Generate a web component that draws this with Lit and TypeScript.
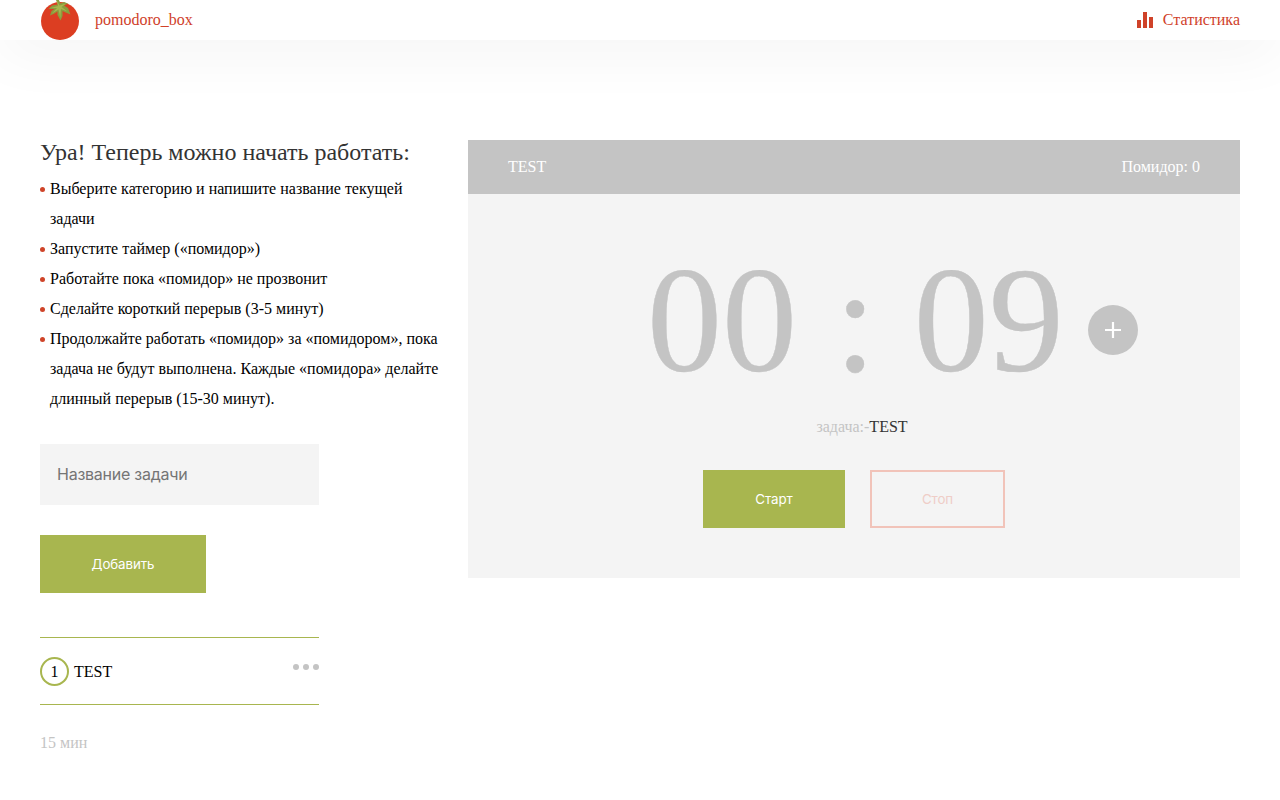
import { LitElement, html, css, svg } from "lit";
import { customElement } from "lit/decorators.js";

const steps = [
  "Выберите категорию и напишите название текущей задачи",
  "Запустите таймер («помидор»)",
  "Работайте пока «помидор» не прозвонит",
  "Сделайте короткий перерыв (3-5 минут)",
  "Продолжайте работать «помидор» за «помидором», пока задача не будут выполнена. Каждые «помидора» делайте длинный перерыв (15-30 минут).",
];

const tomato = svg`
  <circle cx="20" cy="21" r="19" fill="#dc3e22"/>
  <path fill="#8c9c3e" d="M15.500 -1 L18.500 -1 L20.500 3.500 L24 2 L28 3.500 L24 5.500 L28 8 L30.500 14.500 L24.500 12 L22.500 11 L22.500 16 L20.500 20.500 L17.500 15 L17.500 11.500 L13.500 14 L10 15.500 L11.500 11 L14.500 9 L8.500 9 L12 5.500 L18 4.500 Z"/>
  <path fill="#a8b64f" d="M16.500 0 L19.500 5.500 L26 3.500 L21.500 7 L27.500 11.500 L21 9 L20.300 18 L18.500 9.500 L12 13.500 L17 8 L11 8 L18 6 Z"/>`;

@customElement("app-root")
export class AppRoot extends LitElement {
  static styles = css`
    :host { display: block; min-height: 800px; background: #fff; color: #000; font: 16px "Liberation Serif", "Times New Roman", serif; }
    * { box-sizing: border-box; }
    .header { height: 40px; padding: 0 40px; display: flex; align-items: center; justify-content: space-between; background: #fff; color: #d0412a; box-shadow: 0 10px 60px rgba(0,0,0,.06); }
    .logo, .stats { display: flex; align-items: center; }
    .logo { gap: 15px; }
    .stats { gap: 10px; }
    svg { display: block; }
    .main { display: flex; padding: 100px 40px 0; }
    .left { width: 400px; margin-right: 28px; flex: none; }
    h1 { margin: 0; font-size: 24px; font-weight: 400; line-height: 24px; color: #333; white-space: nowrap; }
    .steps { margin: 10px 0 30px; padding: 0; list-style: none; line-height: 30px; }
    .steps li { display: flex; }
    .steps li::before { content: ""; flex: none; width: 5px; height: 5px; margin: 13px 5px 0 0; border-radius: 50%; background: #cf4429; }
    .field { display: block; width: 279px; height: 61px; padding: 0 17px 2px; border: 0; background: #f4f4f4; font: 16px Inter, sans-serif; letter-spacing: -.25px; }
    .field::placeholder { color: #757575; opacity: 1; }
    .btn { height: 58px; padding: 0; border: 0; background: #a8b64f; color: #fff; font: 13.333px Inter, sans-serif; letter-spacing: -.1px; }
    .add { display: block; width: 166px; margin-top: 30px; }
    .task { width: 279px; height: 68px; margin-top: 44px; border: solid #a8b64f; border-width: 1px 0; display: flex; align-items: center; }
    .num { width: 29px; height: 29px; margin-right: 5px; border: 2px solid #a8b64f; border-radius: 50%; display: flex; align-items: center; justify-content: center; padding-top: 1px; }
    .name { padding-top: 2px; }
    .dots { margin: 0 0 9px auto; }
    .total { margin-top: 28px; line-height: 20px; color: #c4c4c4; }
    .panel { flex: 1; height: 438px; background: #f4f4f4; }
    .bar { height: 54px; padding: 0 40px; display: flex; align-items: center; justify-content: space-between; background: #c4c4c4; color: #fff; }
    .clock { display: flex; align-items: center; padding: 40px 0 0 179px; height: 212px; color: #c4c4c4; }
    .time { font-size: 150px; line-height: 172px; white-space: nowrap; -webkit-text-stroke: .4px #c4c4c4; }
    .plus { width: 50px; height: 50px; margin: 20px 0 0 24px; padding: 0; border: 0; background: none; }
    .current { margin: 11px 0 0 16px; line-height: 20px; text-align: center; color: #c4c4c4; }
    .current span { color: #333; }
    .actions { display: flex; justify-content: center; gap: 25px; margin-top: 33px; }
    .start { width: 142px; }
    .stop { width: 135px; border: 2px solid #f1c3b9; background: none; color: #efcdc7; }
  `;

  render() {
    return html`
      <header class="header">
        <div class="logo"><svg width="40" height="40" viewBox="0 0 40 40">${tomato}</svg><span>pomodoro_box</span></div>
        <div class="stats">
          <svg width="16" height="16" viewBox="0 0 16 16" fill="#cf4229"><path d="M0 8h4v8H0zM6 0h4v16H6zM12 5h4v11h-4z"/></svg>
          <span>Статистика</span>
        </div>
      </header>
      <main class="main">
        <section class="left">
          <h1>Ура! Теперь можно начать работать:</h1>
          <ul class="steps">${steps.map((s) => html`<li><span>${s}</span></li>`)}</ul>
          <input class="field" placeholder="Название задачи">
          <button class="btn add">Добавить</button>
          <div class="task">
            <span class="num">1</span><span class="name">TEST</span>
            <svg class="dots" width="26" height="6" viewBox="0 0 26 6" fill="#c4c4c4"><circle cx="3" cy="3" r="3"/><circle cx="13" cy="3" r="3"/><circle cx="23" cy="3" r="3"/></svg>
          </div>
          <div class="total">15 мин</div>
        </section>
        <section class="panel">
          <div class="bar"><span>TEST</span><span>Помидор: 0</span></div>
          <div class="clock">
            <span class="time">00 : 09</span>
            <button class="plus"><svg width="50" height="50" viewBox="0 0 50 50"><circle cx="25" cy="25" r="25" fill="#c4c4c4"/><path d="M25 17v16M17 25h16" stroke="#fff" stroke-width="2.200"/></svg></button>
          </div>
          <div class="current">задача:-<span>TEST</span></div>
          <div class="actions"><button class="btn start">Старт</button><button class="btn stop">Стоп</button></div>
        </section>
      </main>`;
  }
}
